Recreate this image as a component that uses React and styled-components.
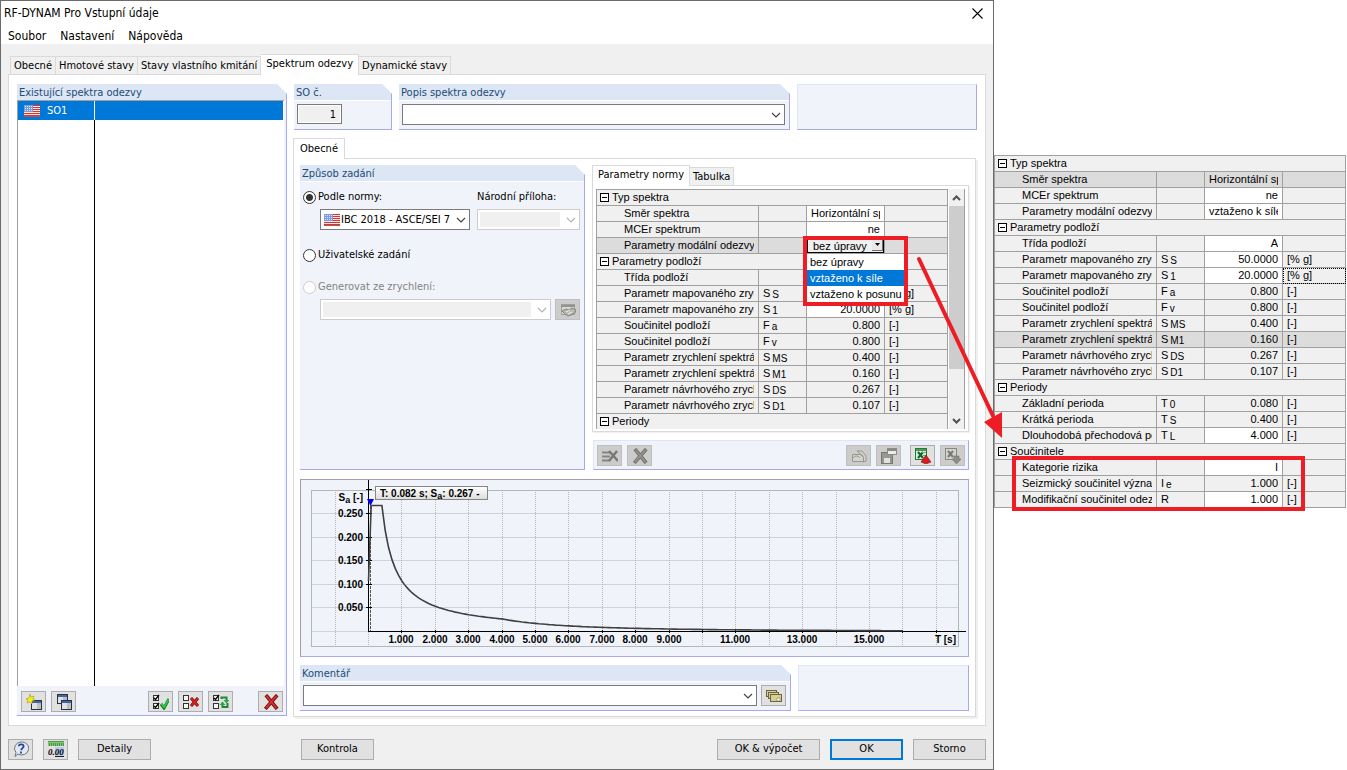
import React, { useState } from "react";
import styled, { createGlobalStyle, css } from "styled-components";

const modalOptions = ["bez úpravy", "vztaženo k síle", "vztaženo k posunu"];

const soilRows = [
  { label: "Parametr mapovaného zrychlení", sym: "S", sub: "S", value: "50.0000", unit: "[% g]", edit: true },
  { label: "Parametr mapovaného zrychlení", sym: "S", sub: "1", value: "20.0000", unit: "[% g]", edit: true, key: "s1" },
  { label: "Součinitel podloží", sym: "F", sub: "a", value: "0.800", unit: "[-]" },
  { label: "Součinitel podloží", sym: "F", sub: "v", value: "0.800", unit: "[-]" },
  { label: "Parametr zrychlení spektrální", sym: "S", sub: "MS", value: "0.400", unit: "[-]" },
  { label: "Parametr zrychlení spektrální", sym: "S", sub: "M1", value: "0.160", unit: "[-]", key: "sm1" },
  { label: "Parametr návrhového zrychlení", sym: "S", sub: "DS", value: "0.267", unit: "[-]" },
  { label: "Parametr návrhového zrychlení", sym: "S", sub: "D1", value: "0.107", unit: "[-]" }
];

const normRows = [
  { group: "Typ spektra" },
  { label: "Směr spektra", value: "Horizontální spektrum", edit: true, left: true },
  { label: "MCEr spektrum", value: "ne", edit: true },
  { label: "Parametry modální odezvy", editor: true, active: true },
  { group: "Parametry podloží" },
  { label: "Třída podloží", value: "", edit: true },
  ...soilRows,
  { group: "Periody" }
];

const resultRows = [
  { group: "Typ spektra" },
  { label: "Směr spektra", value: "Horizontální spektrum", left: true, active: true },
  { label: "MCEr spektrum", value: "ne", edit: true },
  { label: "Parametry modální odezvy", value: "vztaženo k síle", edit: true, left: true },
  { group: "Parametry podloží" },
  { label: "Třída podloží", value: "A", edit: true },
  ...soilRows.map(r => ({ ...r, active: r.key === "sm1", focus: r.key === "s1" })),
  { group: "Periody" },
  { label: "Základní perioda", sym: "T", sub: "0", value: "0.080", unit: "[-]" },
  { label: "Krátká perioda", sym: "T", sub: "S", value: "0.400", unit: "[-]" },
  { label: "Dlouhodobá přechodová perioda", sym: "T", sub: "L", value: "4.000", unit: "[-]", edit: true },
  { group: "Součinitele" },
  { label: "Kategorie rizika", value: "I", edit: true },
  { label: "Seizmický součinitel významnosti", sym: "I", sub: "e", value: "1.000", unit: "[-]" },
  { label: "Modifikační součinitel odezvy", sym: "R", value: "1.000", unit: "[-]", edit: true }
];

const Flag = () => (
  <svg width="16" height="12" viewBox="0 0 16 12">
    <rect width="16" height="12" fill="#f3e6e6" />
    {[0, 2, 4, 6, 8, 10].map(y => (
      <rect key={y} x="8" y={y} width="8" height="1" fill="#d8342c" />
    ))}
    {[8, 10].map(y => (
      <rect key={y} y={y} width="8" height="1" fill="#d8342c" />
    ))}
    <rect y="11" width="16" height="1" fill="#a85a58" />
    <rect width="9" height="7" fill="#7d99de" />
    {[1, 3, 5].map(y => (
      <path key={y} d={`M1 ${y + 0.5}h8`} stroke="#dfe8fb" strokeDasharray="1 1" />
    ))}
  </svg>
);

const Chevron = ({ color = "#444" }) => (
  <svg width="10" height="6" viewBox="0 0 10 6" fill="none" stroke={color} strokeWidth="1.2">
    <path d="M1 1l4 4 4-4" />
  </svg>
);

const Cross = ({ color = "#de2c2c", edge = "#6e1212" }) => (
  <g fill="none" strokeLinecap="square">
    <path d="M4 2.500l9 11M13 2.500L3.500 13.500" stroke={edge} strokeWidth="3.600" />
    <path d="M4 2.500l9 11M13 2.500L3.500 13.500" stroke={color} strokeWidth="1.900" />
  </g>
);

const Box = ({ x, y, checked }) => (
  <g fill="#f4f4f4" stroke="#333">
    <rect x={x + 0.5} y={y + 0.5} width="5" height="5" />
    {checked && <path d={`M${x + 1} ${y + 3}l1.500 1.500L${x + 6} ${y}`} fill="none" stroke="#000" strokeWidth="1.3" />}
  </g>
);

const WindowShape = ({ x, y }) => (
  <g>
    <rect x={x + 0.5} y={y + 0.5} width="10" height="9" fill="#b9c0cc" stroke="#2c3038" />
    <rect x={x + 1} y={y + 3} width="5" height="6" fill="#dde1e8" />
    <rect x={x + 1} y={y + 1} width="9" height="2" fill="#4465a4" />
  </g>
);

const icons = {
  new: (
    <g>
      <WindowShape x={5} y={6} />
      <path d="M4 0l1 3 3-1-1 3 2 1-3 1 0 3-2-2-3 1 1-3-2-1 3-1z" fill="#f4ec20" stroke="#a89c10" strokeWidth="0.6" />
    </g>
  ),
  copy: (
    <g>
      <WindowShape x={1} y={0} />
      <WindowShape x={5} y={6} />
    </g>
  ),
  checkAll: (
    <g>
      <Box x={0} y={1} checked />
      <Box x={0} y={9} checked />
      <path d="M8 10l3 4 5-9" fill="none" stroke="#14762a" strokeWidth="3" />
      <path d="M8.500 10l2.500 3.200 4.600-7.600" fill="none" stroke="#32d24c" strokeWidth="1.500" />
    </g>
  ),
  uncheckAll: (
    <g>
      <Box x={0} y={1} />
      <Box x={0} y={9} />
      <path d="M8 4l7 8M15 4l-7 8" stroke="#701010" strokeWidth="3" />
      <path d="M8 4l7 8M15 4l-7 8" stroke="#e02020" strokeWidth="1.800" />
    </g>
  ),
  invert: (
    <g>
      <Box x={0} y={1} checked />
      <Box x={0} y={9} />
      <path d="M8.500 5V3.500h5V7M14.500 9v4h-5v-3" fill="none" stroke="#1d8a3a" strokeWidth="2" />
      <path d="M10.500 6h6l-3 3.500zM6.500 11h6l-3-3.500z" fill="#26a848" />
    </g>
  ),
  remove: <Cross />,
  help: (
    <g>
      <path d="M8 1a7 6.500 0 1 1-3 12l-3 2.500 1-4A7 6.500 0 0 1 8 1z" fill="#e4e8f2" stroke="#6d7480" />
      <path d="M5.800 5.300c.2-2.700 4.800-2.700 4.800 0 0 1.800-2.300 1.800-2.400 3.900M8 10.600v1.800" fill="none" stroke="#24469a" strokeWidth="1.800" />
    </g>
  ),
  units: (
    <g>
      <rect width="16" height="5" fill="#7ecb74" />
      <path d="M0 .5h16" stroke="#4d9947" />
      {[1, 3, 5, 7, 9, 11, 13, 15].map(x => (
        <path key={x} d={`M${x + 0.5} 2v3`} stroke="#3a7a3a" strokeWidth="0.700" />
      ))}
      <rect x="7" y="6" width="9" height="10" fill="#b9cbea" />
      <text x="0" y="14" fontSize="9" fontWeight="bold" fontStyle="italic" fontFamily="Liberation Serif, serif">
        0.00
      </text>
      <path d="M7 15.500h9" stroke="#222" />
    </g>
  ),
  apply: (
    <g>
      <rect x="1.500" y="2.500" width="13" height="10" fill="#d8d8d2" stroke="#a0a09c" />
      <path d="M1 4h14" stroke="#94948e" strokeWidth="2" />
      <path d="M2 9l4-2 3 1 3-2 4 2-1 3-4 2-3 1-3-2z" fill="#b8b8b0" stroke="#7c7c76" strokeWidth="0.900" />
      <path d="M6 10l4-2M8 12l4-2" stroke="#eee" />
    </g>
  ),
  deleteRow: (
    <g>
      <path d="M0 4.500h8M0 8.500h8M0 12.500h8" stroke="#858581" strokeWidth="2" />
      <path d="M7 3l9 10M15 3l-8 10" stroke="#777773" strokeWidth="2.400" />
    </g>
  ),
  deleteAll: <Cross color="#94948f" edge="#6e6e6a" />,
  open: (
    <g fill="#d4d4ce" stroke="#969690">
      <path d="M6 3h5l4 5v5l-3 1V8z" />
      <path d="M1.500 6.500h8l3 3v4h-11z" />
      <path d="M2 10c2-3 6-2 7 0" fill="none" />
    </g>
  ),
  save: (
    <g>
      <rect x="0.500" y="4.500" width="11" height="11" fill="#979791" stroke="#777773" />
      <rect x="3" y="10" width="6" height="5" fill="#e2e2de" />
      <rect x="6.500" y="0.500" width="9" height="6" fill="#ecece8" stroke="#8b8b86" />
      <path d="M7 2h8" stroke="#8b8b86" strokeWidth="2" />
    </g>
  ),
  exportXls: (
    <g>
      <rect x="0.500" y="0.500" width="11" height="11" fill="#d7efd9" stroke="#217a38" />
      <path d="M1 2h10" stroke="#217a38" strokeWidth="1.500" />
      <path d="M3 4l5 6M8 4l-5 6" stroke="#11642a" strokeWidth="2" />
      <path d="M7 4.500h4M8 7.500h3" stroke="#67ad75" />
      <path d="M11 7l5 7-5 2-5-2z" fill="#d81c20" stroke="#861012" strokeWidth="0.600" />
    </g>
  ),
  importXls: (
    <g>
      <rect x="0.500" y="0.500" width="11" height="11" fill="#d2d2cc" stroke="#888883" />
      <path d="M3 3l5 6M8 3l-5 6" stroke="#777773" strokeWidth="2" />
      <path d="M9 8h5v3h2l-4.500 5L7 11h2z" fill="#8d8d87" stroke="#72726e" strokeWidth="0.600" />
    </g>
  ),
  library: (
    <g fill="#d9cf94" stroke="#6b6440">
      <rect x="0.500" y="2.500" width="10" height="6" />
      <rect x="2.500" y="4.500" width="10" height="6" />
      <rect x="4.500" y="6.500" width="11" height="7" />
      <path d="M11 10h3v2l-1 1h-2z" fill="#fff" strokeWidth="0.500" />
    </g>
  )
};

const IconBtn = ({ icon, label, disabled }) => (
  <SquareButton type="button" aria-label={label} disabled={disabled}>
    <svg width="16" height="16" viewBox="0 0 16 16">
      {icons[icon]}
    </svg>
  </SquareButton>
);

const Combo = ({ label, value, disabled, flag }) => (
  <ComboBox $disabled={disabled}>
    {flag && (
      <ComboFlag>
        <Flag />
      </ComboFlag>
    )}
    <ComboSelect aria-label={label} disabled={disabled} $flag={flag} defaultValue={value}>
      <option>{value}</option>
    </ComboSelect>
    <ComboArrow>
      <Chevron color={disabled ? "#b4b4b4" : "#444"} />
    </ComboArrow>
  </ComboBox>
);

const ModalEditor = () => {
  const [value, setValue] = useState(modalOptions[0]);
  return (
    <Editor>
      <EditorSelect aria-label="Parametry modální odezvy" value={value} onChange={e => setValue(e.target.value)}>
        {modalOptions.map(o => (
          <option key={o}>{o}</option>
        ))}
      </EditorSelect>
      <EditorArrow>
        <svg width="5" height="3" viewBox="0 0 5 3">
          <path d="M0 0h5L2.500 3z" />
        </svg>
      </EditorArrow>
      <DropList role="listbox">
        {modalOptions.map((o, i) => (
          <DropItem key={o} role="option" aria-selected={i === 1} $selected={i === 1} onClick={() => setValue(o)}>
            {o}
          </DropItem>
        ))}
      </DropList>
      <EditorFrame />
    </Editor>
  );
};

const PropertyGrid = ({ rows }) => (
  <Grid>
    <colgroup>
      <LabelCol />
      <SymCol />
      <ValueCol />
      <UnitCol />
    </colgroup>
    <tbody>
      {rows.map((row, i) =>
        row.group ? (
          <tr key={i}>
            <GroupCell colSpan={4}>
              <svg width="9" height="9" viewBox="0 0 9 9" fill="#fff" stroke="#000" shapeRendering="crispEdges">
                <rect x="0.500" y="0.500" width="8" height="8" />
                <path d="M2 4.500h5" />
              </svg>
              {row.group}
            </GroupCell>
          </tr>
        ) : (
          <GridRow key={i} $active={row.active}>
            <LabelCell>
              <Clip>{row.label}</Clip>
            </LabelCell>
            <SymCell>
              {row.sym}
              {row.sub && <sub>{row.sub}</sub>}
            </SymCell>
            <ValueCell $edit={row.edit} $left={row.left}>
              {row.editor ? <ModalEditor /> : <Clip>{row.value}</Clip>}
            </ValueCell>
            <UnitCell $focus={row.focus}>{row.unit}</UnitCell>
          </GridRow>
        )
      )}
    </tbody>
  </Grid>
);

// plot area in svg units
const X0 = 67.5;
const Y0 = 151.5;
const STEP_X = 33.4;
const SCALE_Y = 472;

const px = t => X0 + t * STEP_X;
const py = s => Y0 - s * SCALE_Y;

const spectrum = t => {
  if (t < 0.08) return 0.107 + (0.16 * t) / 0.08;
  if (t <= 0.4) return 0.267;
  if (t <= 4) return 0.107 / t;
  return 0.427 / (t * t);
};

const curve = [0, 0.08, 0.35];
for (let t = 0.4; t <= 16; t += 0.1) curve.push(t);

const Chart = () => (
  <ChartSvg viewBox="0 0 667 176" role="img" aria-label="Spektrum odezvy">
    <defs>
      <linearGradient id="tip" x1="0" y1="0" x2="0" y2="1">
        <stop offset="0" stopColor="#fff" />
        <stop offset="1" stopColor="#dcdcdc" />
      </linearGradient>
    </defs>
    <g shapeRendering="crispEdges" fill="none">
      {[33.5, 57.5, 80.5, 104.5, 127.5, 151.5].map(y => (
        <path key={y} d={`M10 ${y}h648`} stroke="#ccd4d4" />
      ))}
      {[-1, 0, 1, 2, 3, 4, 5, 6, 7, 8, 9, 10, 11, 12, 13, 14, 15, 16, 17].map(n => (
        <path key={n} d={`M${Math.floor(px(n)) + 0.5} 10v156`} stroke="#b2b8b8" strokeDasharray="1 1" />
      ))}
      <rect x="10.500" y="10.500" width="647" height="156" stroke="#b0b8b8" />
      <path d="M69.500 26v125" stroke="#555" strokeDasharray="3 1" />
      <path d="M67.500 0v152M67 151.500h598" stroke="#000" />
      {[9.5, 33.5, 57.5, 80.5, 104.5, 127.5].map(y => (
        <path key={y} d={`M65 ${y}h6`} stroke="#000" />
      ))}
      {[1, 2, 3, 4, 5, 6, 7, 8, 9, 10, 11, 12, 13, 14, 15, 16, 17].map(n => (
        <path key={n} d={`M${Math.floor(px(n)) + 0.5} 150v3`} stroke="#000" />
      ))}
    </g>
    <polyline
      points={curve.map(t => `${px(t).toFixed(1)},${py(spectrum(t)).toFixed(1)}`).join(" ")}
      fill="none"
      stroke="#404040"
      strokeWidth="1.600"
    />
    <path d="M66 19h7l-3.500 7z" fill="#0000f0" />
    <rect x="74.500" y="6.500" width="112" height="13" fill="url(#tip)" stroke="#858585" />
    <text x="79" y="17">
      T: 0.082 s; S<tspan dy="2" fontSize="9">a</tspan>
      <tspan dy="-2">: 0.267 -</tspan>
    </text>
    <g textAnchor="end">
      <text x="62" y="21">
        S<tspan dy="2" fontSize="9">a</tspan>
        <tspan dy="-2"> [-]</tspan>
      </text>
      {["0.250", "0.200", "0.150", "0.100", "0.050"].map((v, i) => (
        <text key={v} x="62" y={37 + Math.round(i * 23.5)}>
          {v}
        </text>
      ))}
      <text x="655" y="163">
        T [s]
      </text>
    </g>
    <g textAnchor="middle">
      {[1, 2, 3, 4, 5, 6, 7, 8, 9, 11, 13, 15].map(n => (
        <text key={n} x={Math.floor(px(n))} y="163">
          {n}.000
        </text>
      ))}
    </g>
  </ChartSvg>
);

const App = () => (
  <React.Fragment>
    <GlobalStyle />
    <Page>
      <Dialog>
        <TitleBar>
          <span>RF-DYNAM Pro Vstupní údaje</span>
          <CloseButton type="button" aria-label="Zavřít">
            <svg width="11" height="11" viewBox="0 0 11 11" stroke="#000" strokeWidth="1.100">
              <path d="M.5.5l10 10M10.500.5l-10 10" />
            </svg>
          </CloseButton>
        </TitleBar>
        <MenuBar>
          <MenuItem type="button">Soubor</MenuItem>
          <MenuItem type="button">Nastavení</MenuItem>
          <MenuItem type="button">Nápověda</MenuItem>
        </MenuBar>
        <MainTabs role="tablist">
          <Tab type="button" role="tab">Obecné</Tab>
          <Tab type="button" role="tab">Hmotové stavy</Tab>
          <Tab type="button" role="tab">Stavy vlastního kmitání</Tab>
          <Tab type="button" role="tab" $active>Spektrum odezvy</Tab>
          <Tab type="button" role="tab">Dynamické stavy</Tab>
        </MainTabs>
        <MainPane>
          <ListPanel>
            <PanelTitle>Existující spektra odezvy</PanelTitle>
            <SpectraList>
              <SpectraRow>
                <SpectraName>
                  <Flag />
                  SO1
                </SpectraName>
              </SpectraRow>
              <SpectraFill />
            </SpectraList>
            <ListTools>
              <IconBtn icon="new" label="Nové" />
              <IconBtn icon="copy" label="Kopírovat" />
              <Spacer />
              <IconBtn icon="checkAll" label="Vybrat vše" />
              <IconBtn icon="uncheckAll" label="Zrušit výběr" />
              <IconBtn icon="invert" label="Obrátit výběr" />
              <ToolGap />
              <IconBtn icon="remove" label="Smazat" />
            </ListTools>
          </ListPanel>
          <Detail>
            <HeadRow>
              <NumberPanel>
                <PanelTitle as="label" htmlFor="so">SO č.</PanelTitle>
                <PanelField>
                  <NumberInput id="so" value="1" readOnly />
                </PanelField>
              </NumberPanel>
              <WidePanel>
                <PanelTitle>Popis spektra odezvy</PanelTitle>
                <PanelField>
                  <Combo label="Popis spektra odezvy" value="" />
                </PanelField>
              </WidePanel>
              <EmptyPanel $width={180} />
            </HeadRow>
            <SubTabs role="tablist">
              <SubTab type="button" role="tab" $active>Obecné</SubTab>
            </SubTabs>
            <SubPane>
              <Columns>
                <WidePanel>
                  <PanelTitle>Způsob zadání</PanelTitle>
                  <MethodForm>
                    <MethodHead>
                      <RadioLabel>
                        <Radio name="method" defaultChecked />
                        Podle normy:
                      </RadioLabel>
                      <AnnexLabel>Národní příloha:</AnnexLabel>
                    </MethodHead>
                    <MethodFields>
                      <NormWrap>
                        <Combo label="Norma" value="IBC 2018 - ASCE/SEI 7" flag />
                      </NormWrap>
                      <Combo label="Národní příloha" value="" disabled />
                    </MethodFields>
                    <RadioStack>
                      <RadioLabel>
                        <Radio name="method" />
                        Uživatelské zadání
                      </RadioLabel>
                      <RadioLabel $disabled>
                        <Radio name="method" disabled />
                        Generovat ze zrychlení:
                      </RadioLabel>
                    </RadioStack>
                    <AccelFields>
                      <Combo label="Zrychlení" value="" disabled />
                      <IconBtn icon="apply" label="Upravit" disabled />
                    </AccelFields>
                  </MethodForm>
                </WidePanel>
                <NormColumn>
                  <NormTabs role="tablist">
                    <Tab type="button" role="tab" $active>Parametry normy</Tab>
                    <Tab type="button" role="tab">Tabulka</Tab>
                  </NormTabs>
                  <GridPane>
                    <GridView>
                      <PropertyGrid rows={normRows} />
                    </GridView>
                    <ScrollBar>
                      <ScrollButton type="button" aria-label="Nahoru">
                        <svg width="9" height="6" viewBox="0 0 9 6" fill="none" stroke="#505050" strokeWidth="2">
                          <path d="M1 5l3.500-3.500L8 5" />
                        </svg>
                      </ScrollButton>
                      <ScrollThumb />
                      <Spacer />
                      <ScrollButton type="button" aria-label="Dolů">
                        <svg width="9" height="6" viewBox="0 0 9 6" fill="none" stroke="#505050" strokeWidth="2">
                          <path d="M1 1l3.500 3.500L8 1" />
                        </svg>
                      </ScrollButton>
                    </ScrollBar>
                  </GridPane>
                  <GridTools>
                    <IconBtn icon="deleteRow" label="Smazat řádek" disabled />
                    <IconBtn icon="deleteAll" label="Smazat vše" disabled />
                    <Spacer />
                    <IconBtn icon="open" label="Otevřít" disabled />
                    <IconBtn icon="save" label="Uložit" disabled />
                    <ExportTools>
                      <IconBtn icon="exportXls" label="Export" />
                      <IconBtn icon="importXls" label="Import" disabled />
                    </ExportTools>
                  </GridTools>
                </NormColumn>
              </Columns>
              <ChartPanel>
                <Chart />
              </ChartPanel>
              <CommentRow>
                <WidePanel>
                  <PanelTitle>Komentář</PanelTitle>
                  <PanelField>
                    <Combo label="Komentář" value="" />
                    <IconBtn icon="library" label="Knihovna" />
                  </PanelField>
                </WidePanel>
                <EmptyPanel $width={171} />
              </CommentRow>
            </SubPane>
          </Detail>
        </MainPane>
        <Footer>
          <FooterStart>
            <IconBtn icon="help" label="Pomoc" />
            <IconBtn icon="units" label="Jednotky" />
            <PushButton type="button">Detaily</PushButton>
          </FooterStart>
          <PushButton type="button">Kontrola</PushButton>
          <Spacer />
          <FooterEnd>
            <PushButton type="button" $wide>OK &amp; výpočet</PushButton>
            <PushButton type="button" $primary>OK</PushButton>
            <PushButton type="button">Storno</PushButton>
          </FooterEnd>
        </Footer>
      </Dialog>
      <Result>
        <ResultGrid>
          <PropertyGrid rows={resultRows} />
          <ResultFrame />
          <Arrow width="90" height="190" viewBox="0 0 90 190">
            <path d="M5 8l74 157" stroke="#ee1c24" strokeWidth="4" strokeLinecap="round" />
            <path d="M70 171l18-10v26z" fill="#ee1c24" />
          </Arrow>
        </ResultGrid>
      </Result>
    </Page>
  </React.Fragment>
);

export default App;

const GlobalStyle = createGlobalStyle`
  * {
    box-sizing: border-box;
  }
  body {
    margin: 0;
    background: #fff;
    color: #000;
    font: 11px/14px "DejaVu Sans Condensed", "Liberation Sans", sans-serif;
  }
  button,
  input,
  select {
    margin: 0;
    color: inherit;
    font: inherit;
  }
  svg {
    display: block;
    flex: none;
  }
`;

const Page = styled.div`
  display: flex;
  align-items: flex-start;
`;

const Dialog = styled.main`
  flex: 1;
  min-width: 0;
  min-height: 100vh;
  display: flex;
  flex-direction: column;
  background: #f0f0f0;
  border: 1px solid #6b6b6b;
`;

const TitleBar = styled.header`
  display: flex;
  justify-content: space-between;
  align-items: center;
  height: 24px;
  padding: 0 10px 0 3px;
  background: #fff;
  font-size: 12px;
`;

const CloseButton = styled.button`
  padding: 0;
  background: none;
  border: 0;
`;

const MenuBar = styled.nav`
  display: flex;
  gap: 14px;
  height: 19px;
  padding: 0 7px;
  background: #fff;
`;

const MenuItem = styled.button`
  padding: 2px 0 0;
  background: none;
  border: 0;
  font-size: 12px;
`;

const MainTabs = styled.div`
  display: flex;
  align-items: flex-end;
  height: 30px;
  padding-left: 9px;
`;

const Tab = styled.button`
  height: 18px;
  padding: 0 3px;
  background: #f0f0f0;
  border: 1px solid #dadada;
  border-bottom: 0;
  white-space: nowrap;
  & + & {
    border-left: 0;
  }
  ${p =>
    p.$active &&
    css`
      position: relative;
      height: 21px;
      margin-bottom: -1px;
      padding: 0 5px 2px;
      background: #fff;
    `}
`;

const MainPane = styled.div`
  flex: 1;
  display: flex;
  gap: 6px;
  margin: 0 7px;
  padding: 9px 8px 8px;
  background: #fff;
  border: 1px solid #dadada;
`;

const Panel = styled.section`
  display: flex;
  flex-direction: column;
  background: #f0f4fa;
  border: solid #a8a8ec;
  border-width: 0 1px 1px 0;
  clip-path: polygon(0 0, calc(100% - 10px) 0, 100% 10px, 100% 100%, 0 100%);
`;

const WidePanel = styled(Panel)`
  flex: 1;
  min-width: 0;
`;

const NumberPanel = styled(Panel)`
  width: 98px;
`;

const ListPanel = styled(Panel)`
  width: 270px;
  margin-bottom: 1px;
  h2 {
    height: 16px;
    border: 0;
  }
`;

const EmptyPanel = styled.div`
  width: ${p => p.$width}px;
  background: #f0f4fa;
  border: 1px solid #dce6f4;
  border-right-color: #a8a8ec;
  border-bottom-color: #a8a8ec;
`;

const PanelTitle = styled.h2`
  display: block;
  height: 17px;
  margin: 0;
  padding: 0 2px;
  background: #dce6f4;
  border-bottom: 1px solid #fff;
  color: #1d4b74;
  font-size: 11px;
  font-weight: normal;
  line-height: 17px;
`;

const PanelField = styled.div`
  display: flex;
  gap: 4px;
  padding: 3px 4px 4px 3px;
`;

const SpectraList = styled.div`
  flex: 1;
  display: flex;
  flex-direction: column;
  margin-right: 2px;
  background: #fff;
  border: solid #a0a0a0;
  border-width: 1px 0 0 1px;
`;

const SpectraRow = styled.div`
  height: 19px;
  margin-right: 1px;
  background: #0078d7;
  color: #fff;
`;

const SpectraName = styled.div`
  display: flex;
  align-items: center;
  gap: 7px;
  width: 77px;
  height: 19px;
  padding-left: 6px;
  border-right: 1px solid #fff;
`;

const SpectraFill = styled.div`
  flex: 1;
  width: 77px;
  border-right: 1px solid #000;
`;

const ListTools = styled.div`
  display: flex;
  gap: 5px;
  padding: 5px 3px 3px 4px;
`;

const Spacer = styled.div`
  flex: 1;
`;

const ToolGap = styled.div`
  width: 15px;
`;

const SquareButton = styled.button`
  display: flex;
  flex: none;
  align-items: center;
  justify-content: center;
  width: 25px;
  height: 21px;
  padding: 0;
  background: #e1e1e1;
  border: 1px solid #adadad;
  &:disabled {
    background: #cccccc;
    border-color: #bfbfbf;
  }
`;

const Detail = styled.div`
  flex: 1;
  min-width: 0;
  display: flex;
  flex-direction: column;
`;

const HeadRow = styled.div`
  display: flex;
  gap: 7px;
  height: 46px;
  padding-left: 1px;
`;

const NumberInput = styled.input`
  width: 45px;
  height: 20px;
  padding: 0 5px;
  background: #f0f0f0;
  border: 1px solid #7a7a7a;
  box-shadow: inset 0 0 0 1px #fff;
  text-align: right;
`;

const ComboBox = styled.div`
  position: relative;
  flex: 1;
  min-width: 0;
  height: 21px;
  background: #fff;
  border: 1px solid ${p => (p.$disabled ? "#cccccc" : "#7a7a7a")};
  padding: ${p => (p.$disabled ? "2px 19px 2px 2px" : "0")};
`;

const ComboSelect = styled.select`
  display: block;
  width: 100%;
  height: 100%;
  padding: 0 0 0 ${p => (p.$flag ? 20 : 3)}px;
  appearance: none;
  background: none;
  border: 0;
  border-radius: 0;
  &:disabled {
    background: #f0f0f0;
    opacity: 1;
  }
`;

const ComboFlag = styled.span`
  position: absolute;
  top: 4px;
  left: 3px;
`;

const ComboArrow = styled.span`
  position: absolute;
  top: 7px;
  right: 3px;
  pointer-events: none;
`;

const SubTabs = styled.div`
  display: flex;
  margin-top: 8px;
`;

const SubTab = styled(Tab)`
  height: 21px;
  padding: 0 6px;
`;

const SubPane = styled.div`
  flex: 1;
  display: flex;
  flex-direction: column;
  margin-right: 1px;
  padding: 6px 6px 5px;
  border: 1px solid #dadada;
  box-shadow: 2px 2px #f0f0f0;
`;

const Columns = styled.div`
  display: flex;
  gap: 7px;
`;

const MethodForm = styled.div`
  display: flex;
  flex-direction: column;
  padding: 8px 4px 0 3px;
`;

const MethodHead = styled.div`
  display: flex;
  justify-content: space-between;
`;

const RadioLabel = styled.label`
  display: flex;
  align-items: center;
  gap: 2px;
  height: 14px;
  color: ${p => (p.$disabled ? "#838383" : "#000")};
`;

const RadioStack = styled.div`
  display: flex;
  flex-direction: column;
  gap: 18px;
`;

const Radio = styled.input.attrs({ type: "radio" })`
  width: 13px;
  height: 13px;
  appearance: none;
  background: #fff;
  border: 1px solid #333;
  border-radius: 50%;
  &:checked {
    background: radial-gradient(circle, #333 0 3px, #fff 4px);
  }
  &:disabled {
    border-color: #ccc;
  }
`;

const AnnexLabel = styled.span`
  width: 103px;
`;

const MethodFields = styled.div`
  display: flex;
  gap: 7px;
  margin: 5px 0 18px 17px;
`;

const NormWrap = styled.div`
  display: flex;
  width: 150px;
`;

const AccelFields = styled.div`
  display: flex;
  gap: 4px;
  margin: 5px 0 0 17px;
`;

const NormColumn = styled.div`
  width: 377px;
`;

const NormTabs = styled.div`
  display: flex;
  align-items: flex-end;
  height: 20px;
`;

const GridPane = styled.div`
  display: flex;
  gap: 1px;
  height: 247px;
  padding: 3px 3px 2px;
  border: 1px solid #dadada;
  box-shadow: 1px 1px #f0f0f0;
`;

const GridView = styled.div`
  flex: 1;
  min-width: 0;
  overflow: hidden;
`;

const ScrollBar = styled.div`
  display: flex;
  flex-direction: column;
  width: 16px;
  background: #f0f0f0;
  border-right: 1px solid #a0a0a0;
`;

const ScrollButton = styled.button`
  display: flex;
  align-items: center;
  justify-content: center;
  height: 17px;
  padding: 0;
  background: none;
  border: 0;
`;

const ScrollThumb = styled.div`
  height: 163px;
  background: #cdcdcd;
`;

const GridTools = styled.div`
  display: flex;
  gap: 5px;
  margin: 8px 0 0 1px;
  padding: 4px 3px 3px;
  background: #f0f4fa;
  border: 1px solid #dce6f4;
  border-right-color: #a8a8ec;
  border-bottom-color: #a8a8ec;
`;

const ExportTools = styled.div`
  display: flex;
  gap: 5px;
  margin-left: 4px;
`;

const ChartPanel = styled.div`
  margin-top: 9px;
  background: #f0f4fa;
  border: 1px solid #a0a0a0;
  border-right-color: #a8a8ec;
  border-bottom-color: #a8a8ec;
`;

const ChartSvg = styled.svg`
  width: 100%;
  height: 176px;
  font: bold 10px "Liberation Sans", sans-serif;
`;

const CommentRow = styled.div`
  display: flex;
  gap: 7px;
  height: 46px;
  margin-top: 8px;
`;

const Footer = styled.footer`
  display: flex;
  align-items: center;
  height: 43px;
  padding: 3px 7px 0;
`;

const FooterStart = styled.div`
  display: flex;
  gap: 10px;
  width: 293px;
`;

const FooterEnd = styled.div`
  display: flex;
  gap: 10px;
`;

const PushButton = styled.button`
  width: ${p => (p.$wide ? 103 : 73)}px;
  height: 21px;
  padding: 0;
  background: #e1e1e1;
  border: ${p => (p.$primary ? "2px solid #0078d7" : "1px solid #adadad")};
`;

const Grid = styled.table`
  width: 352px;
  table-layout: fixed;
  border-collapse: separate;
  border-spacing: 0;
  border: solid #a0a0a0;
  border-width: 1px 0 0 1px;
  background: #f0f0f0;
  font: 11px/15px "Liberation Sans", sans-serif;
  td {
    height: 16px;
    padding: 0;
    border: solid #a0a0a0;
    border-width: 0 1px 1px 0;
    white-space: nowrap;
  }
`;

const LabelCol = styled.col`
  width: 162px;
`;

const SymCol = styled.col`
  width: 48px;
`;

const ValueCol = styled.col`
  width: 78px;
`;

const UnitCol = styled.col`
  width: 63px;
`;

const GroupCell = styled.td`
  svg {
    display: inline-block;
    margin: 0 3px;
    vertical-align: -1px;
  }
`;

const GridRow = styled.tr`
  background: ${p => (p.$active ? "#dcdcdc" : "#f0f0f0")};
`;

const Clip = styled.div`
  height: 15px;
  overflow: hidden;
`;

const LabelCell = styled.td`
  ${Clip} {
    margin: 0 4px 0 27px;
  }
`;

const SymCell = styled.td`
  text-indent: 4px;
  sub {
    margin-left: 2px;
    font-size: 10px;
    line-height: 1px;
    vertical-align: -1px;
  }
`;

const ValueCell = styled.td`
  ${p => p.$edit && "background: #fff;"}
  text-align: ${p => (p.$left ? "left" : "right")};
  ${Clip} {
    margin: 0 4px;
  }
`;

const UnitCell = styled.td`
  text-indent: 4px;
  ${p =>
    p.$focus &&
    css`
      outline: 1px dotted #000;
      outline-offset: -1px;
    `}
`;

const Editor = styled.div`
  position: relative;
  height: 15px;
  text-align: left;
`;

const EditorSelect = styled.select`
  display: block;
  width: 77px;
  height: 15px;
  padding: 0 0 0 5px;
  appearance: none;
  background: #f0f0f0;
  border: 1px solid #000;
  border-radius: 0;
`;

const EditorArrow = styled.span`
  position: absolute;
  top: 1px;
  right: 1px;
  display: flex;
  align-items: center;
  justify-content: center;
  width: 11px;
  height: 12px;
  background: #e8e8e8;
  border: solid #707070;
  border-width: 0 1px 1px 0;
  pointer-events: none;
`;

const DropList = styled.div`
  position: absolute;
  z-index: 2;
  top: 16px;
  left: 0;
  width: 98px;
  background: #fff;
`;

const DropItem = styled.div`
  height: 16px;
  padding-left: 3px;
  background: ${p => (p.$selected ? "#0078d7" : "#fff")};
  color: ${p => (p.$selected ? "#fff" : "#000")};
  line-height: 16px;
`;

const EditorFrame = styled.div`
  position: absolute;
  z-index: 3;
  top: -2px;
  left: -4px;
  width: 105px;
  height: 70px;
  border: 4px solid #ee1c24;
  pointer-events: none;
`;

const Result = styled.aside`
  width: 353px;
  padding-top: 155px;
`;

const ResultGrid = styled.div`
  position: relative;
`;

const ResultFrame = styled.div`
  position: absolute;
  top: 301px;
  left: 18px;
  width: 293px;
  height: 55px;
  border: 4px solid #ee1c24;
`;

const Arrow = styled.svg`
  position: absolute;
  z-index: 4;
  top: 96px;
  left: -80px;
  pointer-events: none;
`;
